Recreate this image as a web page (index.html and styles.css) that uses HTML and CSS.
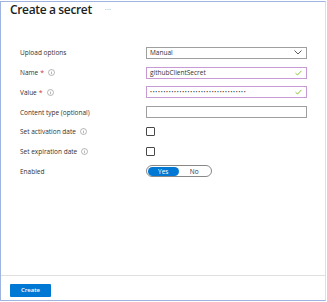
FILE: index.html
```html
<!DOCTYPE html>
<html>
<head>
<meta charset="utf-8">
<link rel="stylesheet" href="styles.css">
</head>
<body>
<div class="panel">
  <div class="header">
    <h1 class="title">Create a secret</h1>
    <span class="more">···</span>
  </div>
  <div class="form">
    <div class="row">
      <div class="label">Upload options</div>
      <div class="control select"><span>Manual</span>
        <svg class="chev" width="8" height="5" viewBox="0 0 8 5"><path d="M0.5 0.5 L4 4 L7.5 0.5" fill="none" stroke="#323130" stroke-width="0.8"/></svg>
      </div>
    </div>
    <div class="row">
      <div class="label">Name <span class="req">*</span>
        <svg class="info" width="7" height="7" viewBox="0 0 7 7"><circle cx="3.5" cy="3.5" r="3" fill="none" stroke="#8a8886" stroke-width="0.6"/><rect x="3.2" y="3" width="0.6" height="2.2" fill="#8a8886"/><rect x="3.2" y="1.8" width="0.6" height="0.6" fill="#8a8886"/></svg>
      </div>
      <div class="control valid"><span>githubClientSecret</span>
        <svg class="check" width="7" height="6" viewBox="0 0 7 6"><path d="M0.5 3.2 L2.5 5 L6.5 0.8" fill="none" stroke="#6bb700" stroke-width="0.8"/></svg>
      </div>
    </div>
    <div class="row">
      <div class="label">Value <span class="req">*</span>
        <svg class="info" width="7" height="7" viewBox="0 0 7 7"><circle cx="3.5" cy="3.5" r="3" fill="none" stroke="#8a8886" stroke-width="0.6"/><rect x="3.2" y="3" width="0.6" height="2.2" fill="#8a8886"/><rect x="3.2" y="1.8" width="0.6" height="0.6" fill="#8a8886"/></svg>
      </div>
      <div class="control valid"><span class="dots">••••••••••••••••••••••••••••••••••••</span>
        <svg class="check" width="7" height="6" viewBox="0 0 7 6"><path d="M0.5 3.2 L2.5 5 L6.5 0.8" fill="none" stroke="#6bb700" stroke-width="0.8"/></svg>
      </div>
    </div>
    <div class="row">
      <div class="label">Content type (optional)</div>
      <div class="control"></div>
    </div>
    <div class="row">
      <div class="label">Set activation date
        <svg class="info" width="7" height="7" viewBox="0 0 7 7"><circle cx="3.5" cy="3.5" r="3" fill="none" stroke="#8a8886" stroke-width="0.6"/><rect x="3.2" y="3" width="0.6" height="2.2" fill="#8a8886"/><rect x="3.2" y="1.8" width="0.6" height="0.6" fill="#8a8886"/></svg>
      </div>
      <div class="cb"></div>
    </div>
    <div class="row">
      <div class="label">Set expiration date
        <svg class="info" width="7" height="7" viewBox="0 0 7 7"><circle cx="3.5" cy="3.5" r="3" fill="none" stroke="#8a8886" stroke-width="0.6"/><rect x="3.2" y="3" width="0.6" height="2.2" fill="#8a8886"/><rect x="3.2" y="1.8" width="0.6" height="0.6" fill="#8a8886"/></svg>
      </div>
      <div class="cb"></div>
    </div>
    <div class="row">
      <div class="label">Enabled</div>
      <div class="toggle"><span class="opt on">Yes</span><span class="opt">No</span></div>
    </div>
  </div>
  <div class="footer">
    <button class="btn">Create</button>
  </div>
</div>
</body>
</html>
```
FILE: styles.css
```css
* { box-sizing: border-box; }
html, body { margin: 0; padding: 0; background: #fff; overflow: hidden; }
body { font-family: "Open Sans", "Noto Sans", sans-serif; color: #323130; padding-top: 1px; }
.panel {
  width: 326px;
  height: 300px;
  border: 1px solid #9fb4e0;
  border-right-color: #d5dff2;
  display: grid;
  grid-template-rows: 16px 257px 25px;
  overflow: hidden;
}
.header { display: flex; align-items: center; padding-left: 9px; height: 16px; overflow: hidden; }
.title { margin: 0; font-size: 12px; font-weight: 600; line-height: 16px; letter-spacing: -0.35px; color: #201f1e; }
.more { margin-left: 13px; font-size: 7px; line-height: 8px; color: #8a8886; letter-spacing: 0.3px; }
.form { padding-top: 25px; padding-left: 19px; overflow: hidden; }
.row { display: flex; align-items: center; height: 19.75px; }
.label { width: 126px; font-size: 6.5px; line-height: 9px; color: #323130; display: flex; align-items: center; }
.req { color: #d13438; margin-left: 2px; font-size: 7px; }
.info { margin-left: 4px; }
.control {
  width: 161px; height: 12px;
  border: 1px solid #a19f9d;
  display: flex; align-items: center; justify-content: space-between;
  padding: 0 4px 0 3px;
  font-size: 6.5px; line-height: 9px; color: #323130;
}
.control.valid { border-color: #c79ad6; }
.dots { font-size: 5px; letter-spacing: 0.8px; }
.cb { width: 9px; height: 9px; border: 1px solid #4a4846; border-radius: 1px; }
.toggle {
  width: 66px; height: 12px; border: 1px solid #8a8886; border-radius: 6px;
  display: flex; align-items: center; padding: 0 1px;
}
.opt { width: 31px; height: 9px; font-size: 6.5px; line-height: 9px; display: flex; align-items: center; justify-content: center; border-radius: 5px; color: #323130; }
.opt.on { background: #0078d4; color: #fff; }
.opt + .opt { width: 32px; }
.footer { border-top: 1px solid #e1dfdd; padding: 8px 0 0 9px; height: 25px; overflow: hidden; }
.btn {
  display: block;
  width: 41px; height: 13px; border: none; border-radius: 1px; background: #0078d4; color: #fff;
  font-family: "Open Sans", sans-serif; font-size: 6px; line-height: 13px; font-weight: 600; padding: 0;
}
```
